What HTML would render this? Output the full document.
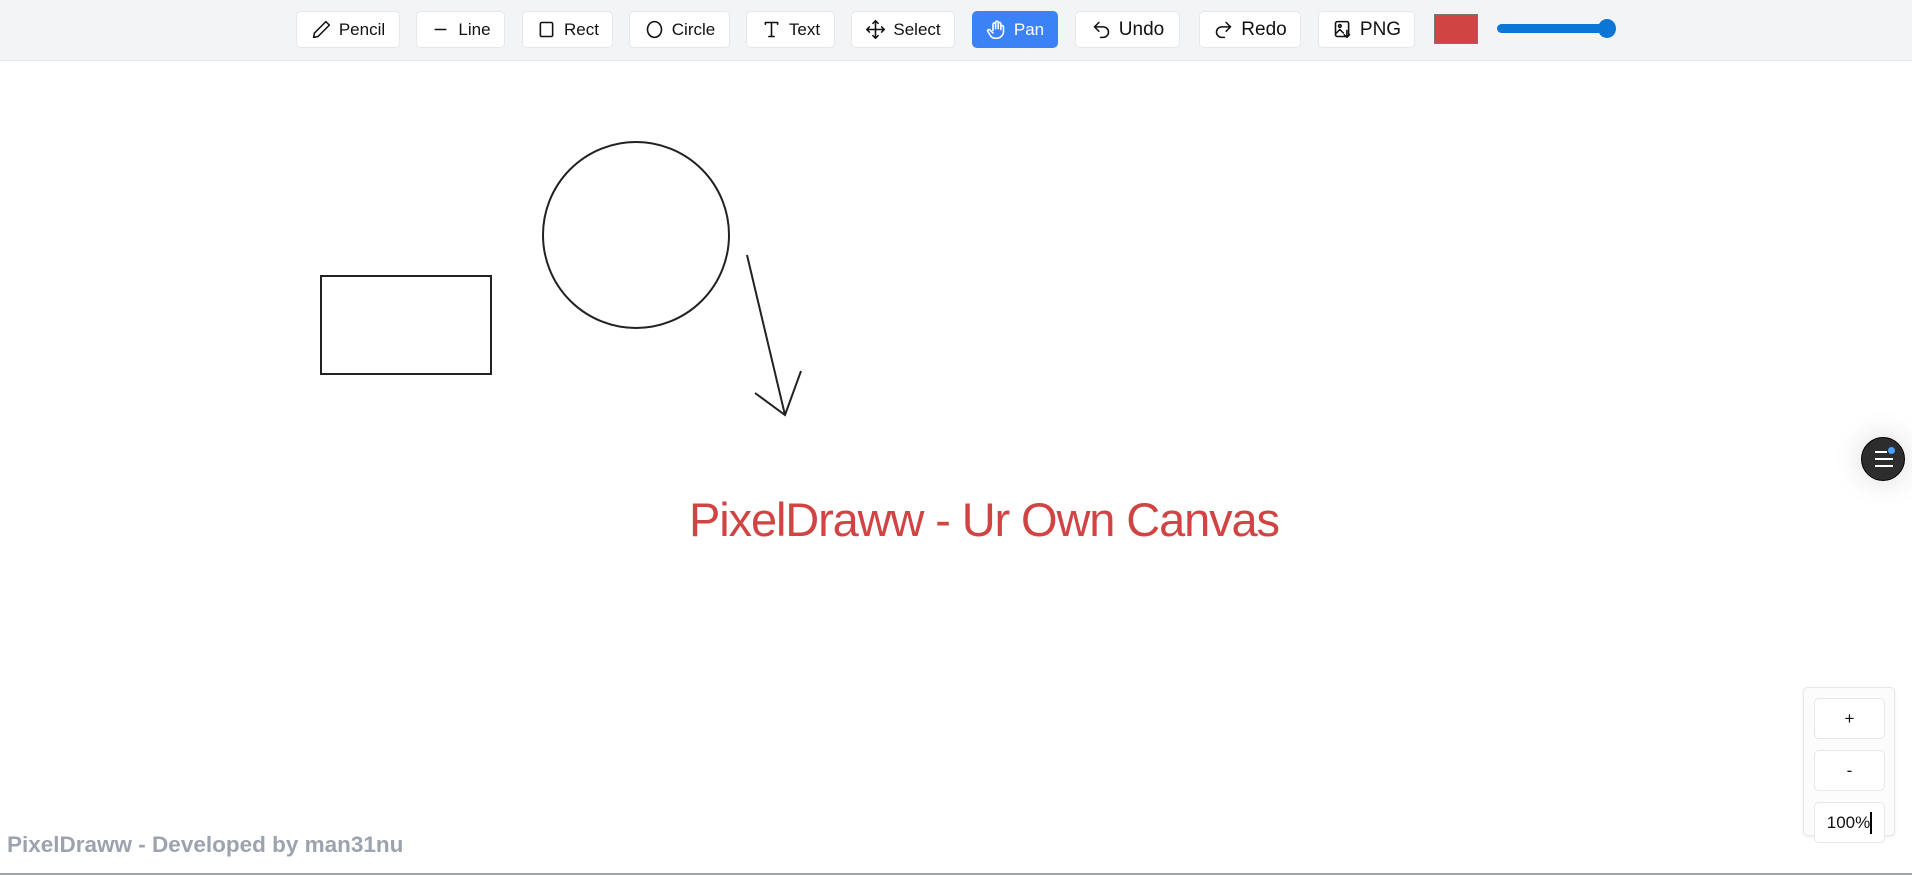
<!DOCTYPE html>
<html><head><meta charset="utf-8"><style>
*{box-sizing:border-box;margin:0;padding:0}
body{width:1912px;height:875px;overflow:hidden;background:#fff;font-family:"Liberation Sans",sans-serif;position:relative}
.bar{position:absolute;left:0;top:0;width:1912px;height:61px;background:#f3f4f6;border-bottom:1px solid #e5e7eb}
.b{position:absolute;top:11px;height:37px;background:#fff;border:1px solid #e5e7eb;border-radius:5px;display:flex;align-items:center;justify-content:center;gap:7px;font-size:17px;color:#111}
.b svg{width:21px;height:21px;fill:none;stroke:#111;stroke-width:1.8;stroke-linecap:round;stroke-linejoin:round}
.pan{background:#3b82f6;border-color:#3b82f6;color:#fff}
.pan svg{stroke:#fff}
.zb{position:absolute;left:1814px;width:71px;height:41px;border:1px solid #e5e7eb;border-radius:5px;background:#fff;display:flex;align-items:center;justify-content:center;font-size:17px;color:#111}
</style></head><body>
<div class="bar">
<div class="b" style="left:296px;width:104px"><svg viewBox="0 0 24 24"><path d="M17 3l4 4L8 20l-5 1 1-5z"/></svg>Pencil</div>
<div class="b" style="left:416px;width:89px"><svg viewBox="0 0 24 24"><path d="M6 12h12"/></svg>Line</div>
<div class="b" style="left:522px;width:91px"><svg viewBox="0 0 24 24"><rect x="5" y="4" width="14" height="16" rx="1.5"/></svg>Rect</div>
<div class="b" style="left:629px;width:101px"><svg viewBox="0 0 24 24"><ellipse cx="12" cy="12" rx="8" ry="9"/></svg>Circle</div>
<div class="b" style="left:746px;width:89px"><svg viewBox="0 0 24 24"><path d="M5 6V4h14v2M12 4v16M9 20h6"/></svg>Text</div>
<div class="b" style="left:851px;width:104px"><svg viewBox="0 0 24 24"><path d="M12 2v20M2 12h20M9 5l3-3 3 3M9 19l3 3 3-3M5 9l-3 3 3 3M19 9l3 3-3 3"/></svg>Select</div>
<div class="b pan" style="left:972px;width:86px"><svg viewBox="0 0 24 24"><path d="M8 13V6a1.5 1.5 0 013 0v5M11 11V4a1.5 1.5 0 013 0v7M14 11V5.5a1.5 1.5 0 013 0V12M17 9a1.5 1.5 0 013 0v5a8 8 0 01-8 8h-1a7 7 0 01-6-3l-3-5a1.5 1.5 0 012.5-1.5L8 16"/></svg>Pan</div>
<div class="b" style="left:1075px;width:105px;font-size:19px"><svg viewBox="0 0 24 24"><path d="M9 14L4 9l5-5M4 9h10a6 6 0 010 12h-3"/></svg>Undo</div>
<div class="b" style="left:1199px;width:102px;font-size:19px"><svg viewBox="0 0 24 24"><path d="M15 14l5-5-5-5M20 9H10a6 6 0 000 12h3"/></svg>Redo</div>
<div class="b" style="left:1318px;width:97px;font-size:19px"><svg viewBox="0 0 24 24"><rect x="4" y="3" width="15" height="17" rx="2"/><circle cx="9" cy="8" r="1.5"/><path d="M4 17l5-5 4 4M17 13v8M14 18l3 3 3-3"/></svg>PNG</div>
<div style="position:absolute;left:1434px;top:14px;width:44px;height:30px;background:#d04444;border:1px solid #777"></div>
<div style="position:absolute;left:1497px;top:24px;width:112px;height:9px;border-radius:5px;background:#0b76d6"></div>
<div style="position:absolute;left:1598px;top:19px;width:18px;height:19px;border-radius:50%;background:#0b76d6"></div>
</div>
<svg style="position:absolute;left:0;top:0" width="1912" height="875">
<g fill="none" stroke="#222" stroke-width="2">
<rect x="321" y="276" width="170" height="98"/>
<circle cx="636" cy="235" r="93"/>
<path d="M747 255L785 415M755 393L785 415L801 371"/>
</g>
<text x="689" y="536" font-family="Liberation Sans" font-size="47" fill="#d04444" textLength="591" lengthAdjust="spacing">PixelDraww - Ur Own Canvas</text>
</svg>
<div style="position:absolute;left:7px;top:832px;font-size:22.5px;font-weight:bold;color:#9ca3af">PixelDraww - Developed by man31nu</div>
<div style="position:absolute;left:0;top:873px;width:1912px;height:2px;background:#9aa6a6"></div>
<div style="position:absolute;left:1861px;top:437px;width:44px;height:44px;border-radius:50%;background:#2d2d2d;border:1px solid #000;box-shadow:0 0 30px rgba(0,0,0,.15)">
<div style="position:absolute;left:13px;top:13px;width:12px;height:2px;background:#fff"></div>
<div style="position:absolute;left:13px;top:20px;width:18px;height:2px;background:#fff"></div>
<div style="position:absolute;left:13px;top:27px;width:18px;height:2px;background:#fff"></div>
<div style="position:absolute;left:26px;top:9px;width:7px;height:7px;border-radius:50%;background:#4ea1ff"></div>
</div>
<div style="position:absolute;left:1803px;top:687px;width:92px;height:149px;border:1px solid #e5e7eb;border-radius:5px;background:#fcfcfc;box-shadow:0 1px 3px rgba(0,0,0,.08)"></div>
<div class="zb" style="top:698px">+</div>
<div class="zb" style="top:750px">-</div>
<div class="zb" style="top:802px">100%<span style="display:inline-block;width:2px;height:22px;background:#000"></span></div>
</body></html>
